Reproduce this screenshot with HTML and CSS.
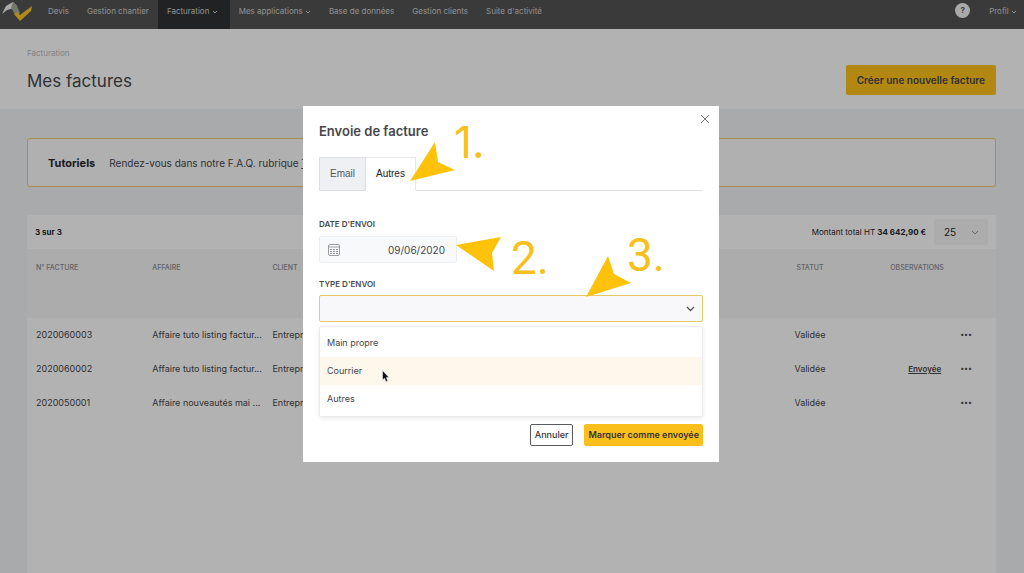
FILE: index.html
```html
<!DOCTYPE html>
<html lang="fr">
<head>
<meta charset="utf-8">
<meta name="viewport" content="width=device-width, initial-scale=1">
<title>Mes factures</title>
<link rel="stylesheet" href="styles.css">
</head>
<body>
<div class="page">
  <nav class="topbar">
    <a class="logo" href="#" aria-label="Accueil">
      <svg width="30" height="20" viewBox="0 0 30 20">
        <path d="M0 13 L4 5 L11 1 L15 5 L9 8 L5 9 Z" fill="#f4f4f4"/>
        <path d="M11 1 L15 5 L18 12 L14 15 L9 7 Z" fill="#a5ab9b"/>
        <path d="M12 13 L15 11 L18 14 L30 5 L29 10 L18 20 Z" fill="#ffc52c"/>
      </svg>
    </a>
    <a class="nav-item" href="#">Devis</a>
    <a class="nav-item" href="#">Gestion chantier</a>
    <a class="nav-item active" href="#">Facturation <svg class="caret" viewBox="0 0 6 4"><path d="M1 1l2 2 2-2"/></svg></a>
    <a class="nav-item" href="#">Mes applications <svg class="caret" viewBox="0 0 6 4"><path d="M1 1l2 2 2-2"/></svg></a>
    <a class="nav-item" href="#">Base de données</a>
    <a class="nav-item" href="#">Gestion clients</a>
    <a class="nav-item" href="#">Suite d'activité</a>
    <a class="help" href="#">?</a>
    <a class="nav-item profile" href="#">Profil <svg class="caret" viewBox="0 0 6 4"><path d="M1 1l2 2 2-2"/></svg></a>
  </nav>

  <header class="page-head">
    <div>
      <p class="breadcrumb">Facturation</p>
      <h1 class="page-title">Mes factures</h1>
    </div>
    <button class="btn-create" type="button">Créer une nouvelle facture</button>
  </header>

  <main class="content">
    <section class="tutorial">
      <strong class="tutorial-title">Tutoriels</strong>
      <span>Rendez-vous dans notre F.A.Q. rubrique <a href="#">Tutoriels</a></span>
    </section>

    <section class="panel">
      <div class="panel-head">
        <strong>3 sur 3</strong>
        <span class="total">Montant total HT <strong>34 642,90 €</strong></span>
        <div class="page-size">
          <select aria-label="Lignes par page"><option>25</option></select>
          <svg width="8" height="5" viewBox="0 0 8 5"><path d="M1 1l3 3 3-3"/></svg>
        </div>
      </div>
      <table class="invoices">
        <colgroup><col class="c-num"><col class="c-case"><col><col class="c-status"><col class="c-obs"><col class="c-more"></colgroup>
        <thead>
          <tr><th>N° facture</th><th>Affaire</th><th>Client</th><th class="mid">Statut</th><th class="mid">Observations</th><th></th></tr>
        </thead>
        <tbody>
          <tr><td>2020060003</td><td>Affaire tuto listing factur...</td><td>Entreprise</td><td class="mid">Validée</td><td></td><td class="more"><button type="button" aria-label="Actions">•••</button></td></tr>
          <tr><td>2020060002</td><td>Affaire tuto listing factur...</td><td>Entreprise</td><td class="mid">Validée</td><td class="sent"><a href="#">Envoyée</a></td><td class="more"><button type="button" aria-label="Actions">•••</button></td></tr>
          <tr><td>2020050001</td><td>Affaire nouveautés mai ...</td><td>Entreprise</td><td class="mid">Validée</td><td></td><td class="more"><button type="button" aria-label="Actions">•••</button></td></tr>
        </tbody>
      </table>
    </section>
  </main>
</div>

<div class="overlay">
  <form class="modal" role="dialog" aria-labelledby="dialog-title">
    <button class="close" type="button" aria-label="Fermer"><svg width="8" height="8" viewBox="0 0 8 8"><path d="M0 0l8 8M8 0L0 8"/></svg></button>
    <h2 class="modal-title" id="dialog-title">Envoie de facture</h2>
    <div class="tabs" role="tablist">
      <button class="tab" type="button" role="tab">Email</button>
      <button class="tab selected" type="button" role="tab" aria-selected="true">Autres</button>
    </div>
    <label class="label" for="date">Date d'envoi</label>
    <div class="date-field">
      <svg width="12" height="12" viewBox="0 0 12 12"><rect class="frame" x=".5" y=".5" width="11" height="11" rx="1.500"/><path class="frame" d="M.5 3h11"/><path class="cells" d="M2 5.500h8M2 7.500h8M2 9.500h8"/></svg>
      <input id="date" type="text" value="09/06/2020">
    </div>
    <label class="label" for="type">Type d'envoi</label>
    <div class="select-field">
      <select id="type"><option value=""></option><option>Main propre</option><option>Courrier</option><option>Autres</option></select>
      <svg width="9" height="6" viewBox="0 0 9 6"><path d="M1 1l3.500 3.500L8 1"/></svg>
    </div>
    <ul class="options" role="listbox" aria-label="Type d'envoi">
      <li role="option">Main propre</li>
      <li class="hover" role="option">Courrier</li>
      <li role="option">Autres</li>
    </ul>
    <div class="actions">
      <button class="btn cancel" type="button">Annuler</button>
      <button class="btn confirm" type="submit">Marquer comme envoyée</button>
    </div>
    <svg class="marks" viewBox="0 0 416 356">
      <path class="arrow" d="M107 75L132 36L135 56L152 64ZM153 139L198 131L189 147L191 165ZM283 191L305 150L311 168L328 177Z"/>
      <text class="narrow" x="151" y="52">1.</text>
      <text x="208" y="168">2.</text>
      <text x="324" y="165">3.</text>
      <path class="pointer" d="M79.500 264.500V274L81.500 272.300L83 275.700L84.800 275L83.300 271.500H86Z"/>
    </svg>
  </form>
</div>
</body>
</html>
```

FILE: styles.css
```css
* { box-sizing: border-box; }

body {
  margin: 0;
  font-family: Inter, "Open Sans", sans-serif;
  font-size: 9px;
  line-height: 12px;
  color: #46474b;
}

h1, h2, p, ul { margin: 0; padding: 0; }
button, input, select { font: inherit; color: inherit; }
a { color: inherit; }

.page {
  display: flex;
  flex-direction: column;
  min-height: 100vh;
  background: #f3f4f5;
}

/* Top bar */
.topbar {
  display: flex;
  height: 29px;
  padding: 0 7px 0 2px;
  background: #535454;
  color: #cfcfcf;
  font-size: 8px;
}
.logo { width: 37px; }
.logo svg { display: block; margin-top: 1px; }
.nav-item {
  padding: 5px 9px 0;
  text-decoration: none;
  white-space: nowrap;
}
.nav-item.active { padding-right: 12px; background: #303233; }
.caret {
  width: 6px;
  height: 4px;
  vertical-align: middle;
  fill: none;
  stroke: currentColor;
}
.help {
  width: 15px;
  height: 15px;
  margin: 3px 10px 0 auto;
  border-radius: 50%;
  background: #f2f2f2;
  color: #535454;
  font-weight: 700;
  line-height: 15px;
  text-align: center;
  text-decoration: none;
}
.nav-item.profile { padding-right: 0; }

/* Page heading */
.page-head {
  display: flex;
  justify-content: space-between;
  align-items: flex-end;
  padding: 18px 28px 14px 27px;
  background: #fff;
}
.breadcrumb { color: #b9babd; font-size: 8px; }
.page-title {
  margin: 10px 0 2px;
  font-size: 17px;
  font-weight: 400;
  line-height: 24px;
}
.btn-create {
  height: 30px;
  padding: 0 11px;
  border: 0;
  border-radius: 2px;
  background: #ffc31b;
  font-size: 10px;
  font-weight: 600;
  white-space: nowrap;
}

/* Content */
.content {
  display: flex;
  flex: 1;
  flex-direction: column;
  gap: 28px;
  padding: 29px 28px 0 27px;
}
.tutorial {
  display: flex;
  align-items: center;
  gap: 14px;
  height: 49px;
  padding: 0 20px;
  border: 1px solid #f0cd70;
  border-radius: 3px;
  background: #fdfdfd;
  font-size: 10px;
}
.tutorial-title { color: #26272a; font-size: 11px; }

.panel { flex: 1; background: #fff; }
.panel-head {
  display: flex;
  align-items: center;
  height: 34px;
  padding: 0 8px;
  color: #26272a;
  font-size: 8px;
}
.total { margin: 0 8px 0 auto; }
.page-size {
  display: flex;
  align-items: center;
  width: 54px;
  height: 26px;
  padding: 0 9px 0 10px;
  border-radius: 3px;
  background: #f7f7f8;
  font-size: 10px;
}
.page-size select {
  flex: 1;
  min-width: 0;
  padding: 0;
  border: 0;
  appearance: none;
  background: none;
}
.page-size svg { fill: none; stroke: #9a9b9f; }

.invoices { width: 100%; border-collapse: collapse; table-layout: fixed; }
.c-num { width: 12%; }
.c-case { width: 12.4%; }
.c-status { width: 13.2%; }
.c-obs { width: 8.9%; }
.c-more { width: 3.7%; }
.invoices th {
  height: 69px;
  padding: 13px 9px 0;
  background: #f6f7f8;
  color: #8b8d91;
  font-size: 7px;
  font-weight: 500;
  text-align: left;
  text-transform: uppercase;
  vertical-align: top;
}
.invoices td { height: 34px; padding: 0 9px; white-space: nowrap; }
.invoices td a { font-size: 8px; font-weight: 600; }
.invoices .mid { padding: 0; text-align: center; }
.invoices th.mid { padding-top: 13px; }
.invoices .sent { padding-right: 19px; text-align: right; }
.invoices .more { padding: 0; font-size: 7px; }
.more button { padding: 0; border: 0; background: none; }

/* Dialog */
.overlay {
  position: fixed;
  inset: 0;
  display: flex;
  justify-content: center;
  align-items: flex-start;
  padding: 106px 2px 0 0;
  background: rgba(0, 0, 0, 0.3);
}
.modal {
  position: relative;
  width: 416px;
  max-width: 100%;
  padding: 16px;
  background: #fff;
}
.close {
  position: absolute;
  top: 9px;
  right: 10px;
  display: flex;
  padding: 0;
  border: 0;
  background: none;
}
.close svg { fill: none; stroke: #77787c; }
.modal-title {
  font-size: 13px;
  font-weight: 600;
  line-height: 18px;
}
.tabs {
  display: flex;
  height: 34px;
  margin: 17px 0 27px;
  border-bottom: 1px solid #e3e3e5;
}
.tab {
  height: 34px;
  padding: 0 10px;
  border: 1px solid #dedfe3;
  background: #eff0f3;
  color: #55565b;
  font-family: "Liberation Sans", Arial, sans-serif;
  font-size: 10px;
}
.tab.selected {
  border-color: #e9e9eb;
  border-left: 0;
  border-bottom-color: #fff;
  background: #fff;
  color: #1f2023;
}
.label {
  display: block;
  font-size: 8px;
  font-weight: 600;
  text-transform: uppercase;
}
.date-field {
  display: flex;
  align-items: center;
  width: 138px;
  height: 27px;
  margin: 6px 0 15px;
  padding: 0 11px 0 8px;
  border: 1px solid #eceef1;
  border-radius: 2px;
  background: #f8f9fb;
}
.date-field svg { flex: none; fill: none; }
.frame { stroke: #9b9da2; }
.cells { stroke: #8b8d92; stroke-dasharray: 2 1; }
.date-field input {
  flex: 1;
  min-width: 0;
  padding: 0;
  border: 0;
  background: none;
  font-size: 10px;
  text-align: right;
}
.select-field {
  display: flex;
  align-items: center;
  height: 27px;
  margin-top: 5px;
  padding-right: 7px;
  border: 1px solid #e8c866;
  border-radius: 2px;
  background: #f8f8fb;
}
.select-field select {
  flex: 1;
  height: 25px;
  border: 0;
  appearance: none;
  background: none;
}
.select-field svg { fill: none; stroke: #55565b; stroke-width: 1.3; }
.options {
  margin-top: 4px;
  padding: 2px 0 3px;
  border: 1px solid #ececee;
  border-radius: 2px;
  background: #fff;
  box-shadow: 0 2px 4px rgba(0, 0, 0, 0.08);
  list-style: none;
}
.options li { padding: 8px 7px; }
.options .hover { background: #fef8ec; }
.actions {
  display: flex;
  justify-content: flex-end;
  gap: 11px;
  margin-top: 7px;
}
.btn {
  height: 22px;
  padding: 0 4px;
  border: 1px solid #5a5b60;
  border-radius: 2px;
  background: #fff;
  color: #333438;
  font-weight: 500;
  white-space: nowrap;
}
.confirm {
  padding: 0 3px;
  border-color: #fbbf1b;
  background: #fbbf1b;
  font-weight: 600;
}

/* Numbered steps drawn over the dialog */
.marks {
  position: absolute;
  top: 0;
  left: 0;
  width: 416px;
  height: 356px;
  pointer-events: none;
}
.marks text { fill: #f8c01c; font-family: Roboto, sans-serif; font-size: 46px; }
.marks .narrow { font-family: Inter, sans-serif; font-size: 44px; }
.arrow { fill: #ffc20a; }
.pointer { fill: #111; stroke: #fff; stroke-width: 0.5; }
```
